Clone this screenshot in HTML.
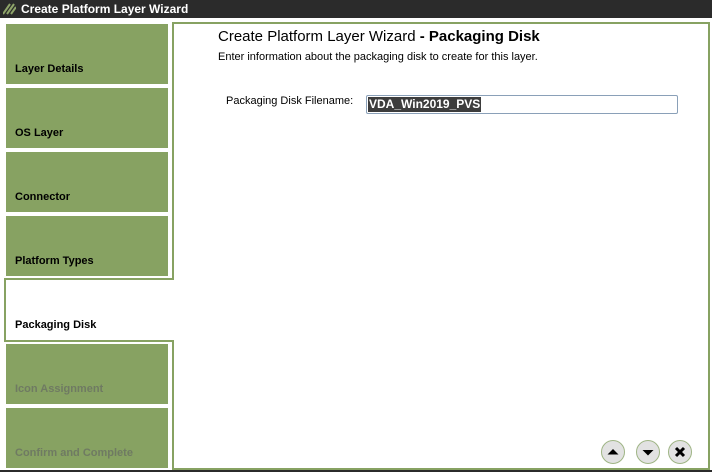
<!DOCTYPE html>
<html><head><style>
*{margin:0;padding:0;box-sizing:border-box}
body{width:712px;height:472px;background:#fff;position:relative;overflow:hidden;font-family:"Liberation Sans",Arial,sans-serif}
.tb{position:absolute;left:0;top:0;width:712px;height:18px;background:#2b2b2b;color:#fff;font-size:12px;font-weight:bold}
.tb span{position:absolute;left:21px;top:2px}
.tab{position:absolute;left:6px;width:162px;height:60px;background:#87a262;font-size:11px;font-weight:bold;color:#000}
.tab span{position:absolute;left:9px;bottom:9px}
.dis{color:#6f7a62}
.panel{position:absolute;left:172px;top:22px;width:538px;height:448px;border:2px solid #87a262}
.act{position:absolute;left:4px;top:278px;width:170px;height:64px;border:2px solid #87a262;border-right:none;background:#fff;font-size:11px;font-weight:bold}
.act span{position:absolute;left:9px;bottom:9px}
.btn{position:absolute;top:440px;width:24px;height:24px;border-radius:50%;background:#e2e2e2;border:1px solid #9fb585}
</style></head><body>
<div class="tb"><svg style="position:absolute;left:3px;top:3px" width="13" height="12"><g stroke="#8fa56a" stroke-width="2"><line x1="0" y1="11" x2="7" y2="1"/><line x1="4" y1="11" x2="11" y2="1"/><line x1="8" y1="11" x2="13" y2="4"/></g></svg><span>Create Platform Layer Wizard</span></div>
<div class="panel"></div>
<div class="tab" style="top:24px"><span>Layer Details</span></div>
<div class="tab" style="top:88px"><span>OS Layer</span></div>
<div class="tab" style="top:152px"><span>Connector</span></div>
<div class="tab" style="top:216px"><span>Platform Types</span></div>
<div class="act"><span>Packaging Disk</span></div>
<div class="tab" style="top:344px"><span class="dis">Icon Assignment</span></div>
<div class="tab" style="top:408px"><span class="dis">Confirm and Complete</span></div>
<div style="position:absolute;left:218px;top:28px;font-size:15px">Create Platform Layer Wizard <b>- Packaging Disk</b></div>
<div style="position:absolute;left:218px;top:51px;font-size:11px">Enter information about the packaging disk to create for this layer.</div>
<div style="position:absolute;left:226px;top:95px;font-size:11px">Packaging Disk Filename:</div>
<div style="position:absolute;left:366px;top:95px;width:312px;height:19px;border:1px solid #8aa0b8;border-radius:2px"><span style="position:absolute;left:1px;top:1px;background:#3d3d3d;color:#fff;font-size:12px;font-weight:bold;padding:0 1px;line-height:15px">VDA_Win2019_PVS</span></div>
<div class="btn" style="left:601px"><svg width="22" height="22"><path d="M5.5 13.5L11 8L16.5 13.5Z" fill="#000"/></svg></div>
<div class="btn" style="left:636px"><svg width="22" height="22"><path d="M5.5 9L11 14.5L16.5 9Z" fill="#000"/></svg></div>
<div class="btn" style="left:668px"><svg width="22" height="22"><path d="M7 7L15 15M15 7L7 15" stroke="#000" stroke-width="3"/></svg></div>
<div style="position:absolute;left:0;top:470px;width:712px;height:2px;background:#2b2b2b"></div>
</body></html>
